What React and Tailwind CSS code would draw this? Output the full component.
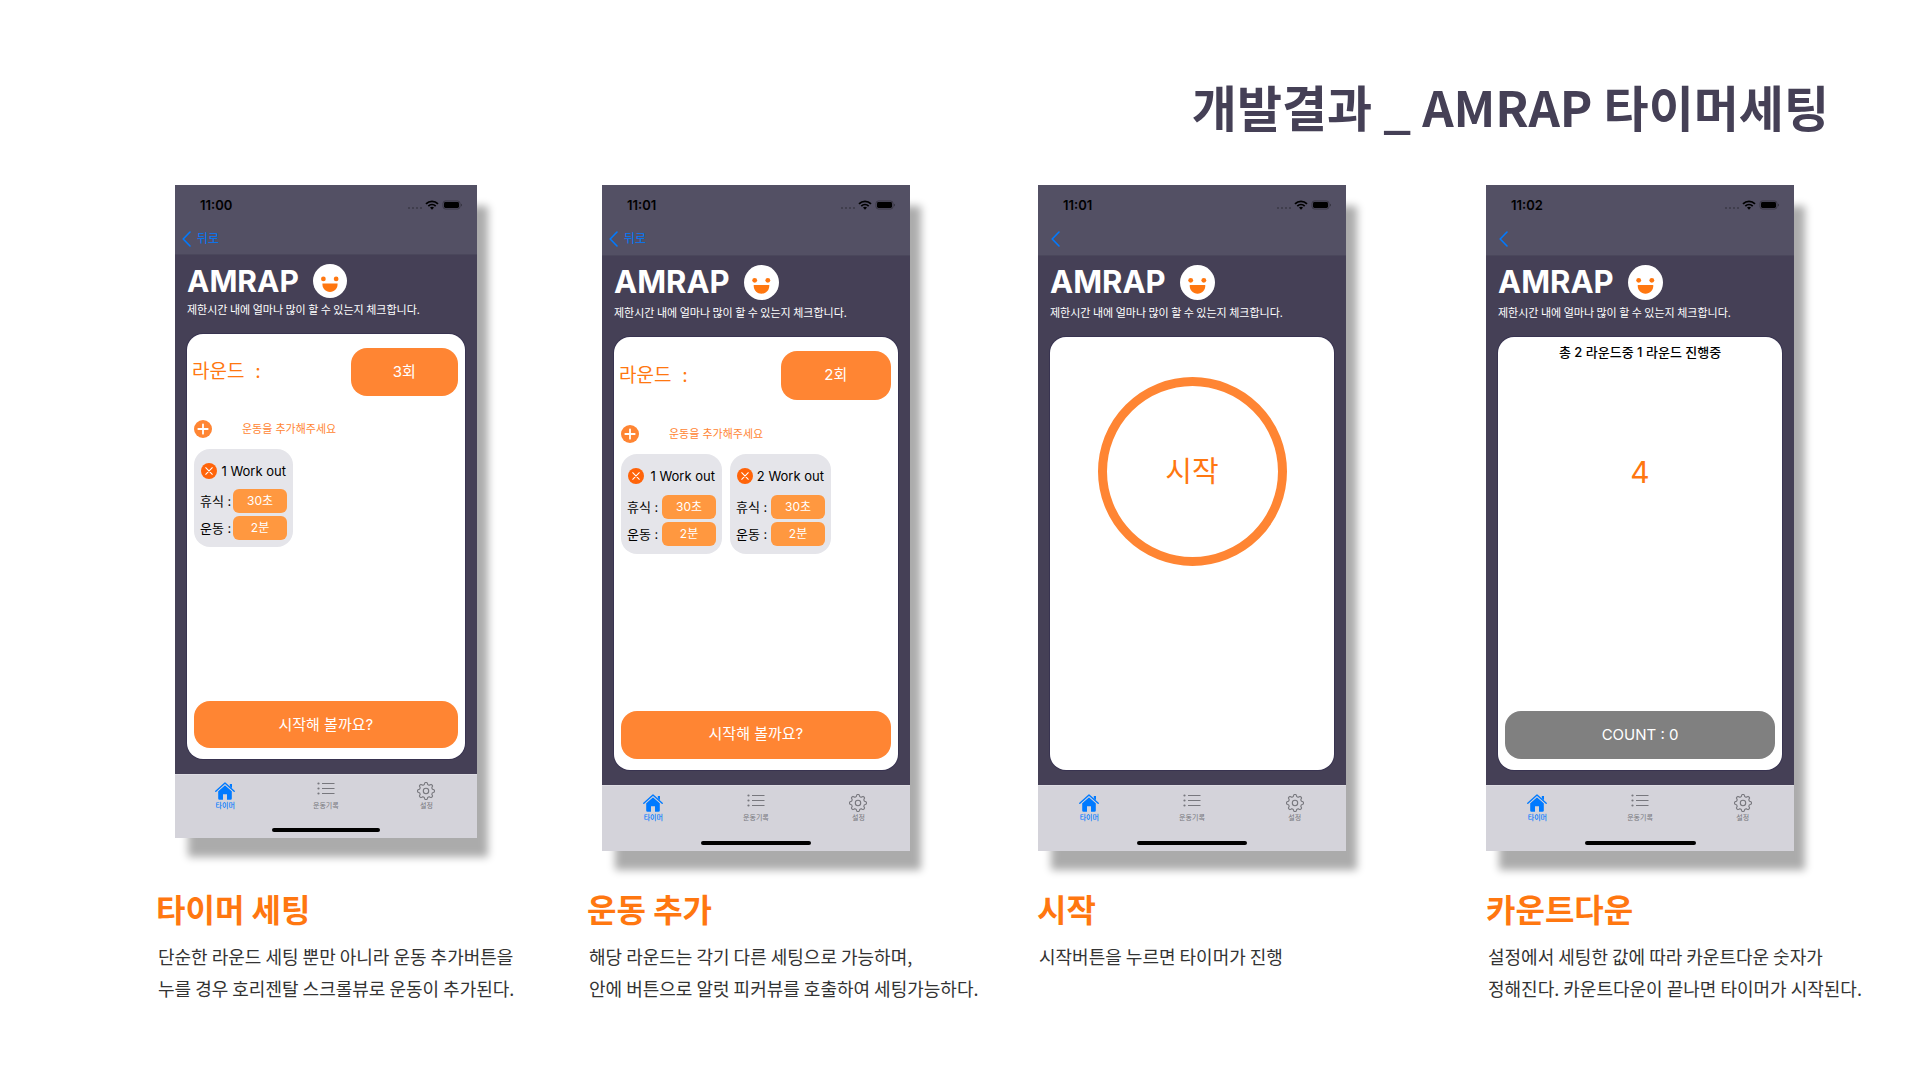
import React from "react";
import clsx from "clsx";

const UI_FONT = "font-['Inter','Noto_Sans_CJK_KR',sans-serif]";

function StatusIcons() {
  return (
    <svg width="56" height="12" viewBox="0 0 56 12" aria-hidden="true">
      <g fill="#3a3846">
        <circle cx="2" cy="9" r="1" />
        <circle cx="6" cy="9" r="1" />
        <circle cx="10" cy="9" r="1" />
        <circle cx="14" cy="9" r="1" />
      </g>
      <g fill="none" stroke="#000" strokeWidth="1.8">
        <path d="M19 4.8a8.6 8.6 0 0 1 12 0" />
        <path d="M21.3 7.1a5.4 5.4 0 0 1 7.4 0" />
      </g>
      <path d="M25 10.8l-2-2.2a2.9 2.9 0 0 1 4 0z" fill="#000" />
      <rect x="36" y="2" width="17" height="8" rx="2.4" fill="none" stroke="#33313d" strokeWidth="0.8" />
      <rect x="37" y="3" width="15" height="6" rx="1.4" fill="#000" />
      <path d="M54 4.8v2.6c.7-.2 1-.7 1-1.3s-.3-1.1-1-1.3z" fill="#33313d" />
    </svg>
  );
}

function Smiley({ compact }) {
  return (
    <svg className={compact ? "size-[34px]" : "size-[35px]"} viewBox="0 0 36 36" aria-hidden="true">
      <circle cx="18" cy="18" r="18" fill="#fff" />
      <circle cx="11" cy="15.8" r="2.5" fill="#ff7710" />
      <circle cx="24.5" cy="15.8" r="2.5" fill="#ff7710" />
      <path d="M10 20.6h16c.4 5.2-3.4 9-8 9s-8.400-3.800-8-9z" fill="#ff7710" />
    </svg>
  );
}

function HomeIcon() {
  return (
    <svg width="20" height="18" viewBox="0 0 20 18" aria-hidden="true">
      <path d="M10 3.300l6.800 6v7.200a1.300 1.300 0 0 1-1.300 1.300H12v-5.600H8v5.600H4.500a1.300 1.300 0 0 1-1.300-1.300V9.300z" fill="#007aff" />
      <path d="M.8 9.200L10 1l9.200 8.200" fill="none" stroke="#d4d3da" strokeWidth="3" />
      <path d="M.8 9.200L10 1l9.200 8.200" fill="none" stroke="#007aff" strokeWidth="1.400" strokeLinecap="round" strokeLinejoin="round" />
      <path d="M14.800 2h2.200v4.200l-2.200-2z" fill="#007aff" />
    </svg>
  );
}

function ListIcon() {
  return (
    <svg width="18" height="18" viewBox="0 0 18 18" aria-hidden="true">
      <g fill="#77777d">
        <circle cx="1.500" cy="1.500" r="1.100" />
        <circle cx="1.500" cy="6.500" r="1.100" />
        <circle cx="1.500" cy="11.500" r="1.100" />
      </g>
      <path d="M5 1.500h12.500M5 6.500h12.500M5 11.500h12.500" stroke="#77777d" strokeWidth="1" />
    </svg>
  );
}

function gearPath() {
  const points = [];
  for (let i = 0; i < 96; i++) {
    const a = (i / 96) * Math.PI * 2;
    const wave = Math.max(-1, Math.min(1, Math.cos(a * 8) * 1.7));
    const r = 7.5 + wave * 0.95;
    points.push((9 + r * Math.sin(a)).toFixed(2) + " " + (9 - r * Math.cos(a)).toFixed(2));
  }
  return "M" + points.join("L") + "Z";
}

function GearIcon() {
  return (
    <svg width="18" height="18" viewBox="0 0 18 18" fill="none" stroke="#77777d" strokeWidth="1.100" aria-hidden="true">
      <path d={gearPath()} strokeLinejoin="round" />
      <circle cx="9" cy="9" r="2.700" />
    </svg>
  );
}

function CircleGlyph({ size, color, cross }) {
  return (
    <svg width={size} height={size} viewBox="0 0 18 18" aria-hidden="true">
      <circle cx="9" cy="9" r="9" fill={color} />
      <path
        d={cross ? "M5.300 5.300l7.400 7.400M12.700 5.300l-7.400 7.400" : "M9 4.300v9.400M4.300 9h9.400"}
        stroke="#fff"
        strokeWidth={cross ? 1.2 : 1.8}
        strokeLinecap="round"
      />
    </svg>
  );
}

function Chip({ label, value }) {
  return (
    <div className="flex items-center justify-between">
      <span className="text-[13px] leading-6 text-black whitespace-nowrap">{label} :</span>
      <button type="button" aria-label={label + " " + value} className="h-6 w-[54px] rounded-md bg-[#ff9840] text-[12px] leading-6 text-white">
        {value}
      </button>
    </div>
  );
}

function WorkoutCard({ index, compact }) {
  return (
    <li className={clsx("rounded-[16px] bg-[#e5e5ea] px-1.5 pt-3", compact ? "h-[98px] w-[99px]" : "h-[100px] w-[101px]")}>
      <div className="flex items-center justify-between px-px">
        <button type="button" aria-label={"Remove workout " + index}>
          <CircleGlyph size={16} color="#ff640a" cross />
        </button>
        <span className="text-[13px] leading-5 text-black whitespace-nowrap">{index} Work out</span>
      </div>
      <div className={clsx("grid gap-[3px]", compact ? "mt-2" : "mt-[9px]")}>
        <Chip label="휴식" value="30초" />
        <Chip label="운동" value="2분" />
      </div>
    </li>
  );
}

function SettingScreen({ rounds, workouts, compact }) {
  return (
    <div className="flex grow flex-col px-[7px] pt-3.5 pb-[11px]">
      <div className="-ml-0.5 flex items-center justify-between">
        <span className="text-[19px] leading-6 text-[#ff7710] whitespace-pre">라운드  :</span>
        <button type="button" className={clsx("rounded-[16px] bg-[#ff8533] text-[15px] text-white", compact ? "h-12 w-[107px]" : "h-[49px] w-[110px]")}>
          {rounds}회
        </button>
      </div>
      <div className={clsx("flex items-center gap-[30px]", compact ? "mt-[23px]" : "mt-6")}>
        <button type="button" aria-label="운동 추가">
          <CircleGlyph size={18} color="#ff8533" />
        </button>
        <span className="text-[11px] leading-5 text-[#ff8533]">운동을 추가해주세요</span>
      </div>
      <ul className="mt-2.5 flex gap-2">
        {workouts.map((n) => (
          <WorkoutCard key={n} index={n} compact={compact} />
        ))}
      </ul>
      <button type="button" className={clsx("mt-auto rounded-[16px] bg-[#ff8533] text-[15px] text-white", compact ? "h-[47px]" : "h-12")}>
        시작해 볼까요?
      </button>
    </div>
  );
}

function StartScreen() {
  return (
    <div className="flex grow flex-col items-center pt-10">
      <button type="button" className="size-[189px] rounded-full border-[9px] border-[#ff8533] text-[29px] text-[#ff7710]">
        시작
      </button>
    </div>
  );
}

function CountdownScreen() {
  return (
    <div className="flex grow flex-col items-center px-[7px] pt-[5px] pb-[11px]">
      <p className="text-[13px] leading-5 font-medium text-black">총 2 라운드중 1 라운드 진행중</p>
      <p className="mt-[90px] text-[30px] leading-10 text-[#ff7710]">4</p>
      <button type="button" className="mt-auto h-12 w-full rounded-[16px] bg-[#808080] text-[15px] text-white">
        COUNT : 0
      </button>
    </div>
  );
}

function TabBar({ compact }) {
  const tabs = [
    { label: "타이머", icon: <HomeIcon />, active: true },
    { label: "운동기록", icon: <ListIcon /> },
    { label: "설정", icon: <GearIcon /> },
  ];
  return (
    <nav className={clsx("flex flex-col justify-between border-t border-[#dddce2] bg-[#d4d3da] pb-1.5", compact ? "h-16 pt-[7px]" : "h-[66px] pt-2")}>
      <div className="grid grid-cols-3">
        {tabs.map((t) => (
          <a key={t.label} href="#" className={clsx("flex flex-col items-center text-[7px]", t.active ? "font-medium text-[#007aff]" : "text-[#77777d]")}>
            {t.icon}
            <span className="mt-px leading-[10px]">{t.label}</span>
          </a>
        ))}
      </div>
      <div className="mx-auto h-1 w-[36%] rounded-full bg-black" />
    </nav>
  );
}

function Phone({ time, backLabel, compact, className, children }) {
  return (
    <div className={clsx(UI_FONT, "flex flex-col self-start bg-[#454056] shadow-[12px_20px_8px_-1px_rgba(0,0,0,0.33)]", className)}>
      <header className={clsx("border-b border-[#4a475b] bg-[#535064] pt-2.5", compact ? "h-[70px]" : "h-[71px]")}>
        <div className="flex items-center justify-between pl-[25px] pr-3.5">
          <span className="text-[13px] leading-5 font-semibold text-black">{time}</span>
          <StatusIcons />
        </div>
        <button type="button" aria-label={backLabel || "뒤로"} className={clsx("mt-3.5 flex items-center gap-1.5 text-[12px] leading-5 text-[#007aff]", backLabel ? "ml-[7px]" : "ml-[13px]")}>
          <svg width="9" height="20" viewBox="0 0 9 20" fill="none" stroke="#007aff" strokeWidth="1.600" strokeLinecap="round" strokeLinejoin="round" aria-hidden="true">
            <path d="M8 3L1.200 10L8 17" />
          </svg>
          {backLabel}
        </button>
      </header>
      <div className="flex grow flex-col px-3 pt-2 pb-[15px]">
        <div className="flex items-center gap-3.5">
          <h3 className={clsx("leading-9 font-bold text-white", compact ? "text-[30px]" : "text-[31px]")}>AMRAP</h3>
          <Smiley compact={compact} />
        </div>
        <p className={clsx("mb-[15px] font-['Noto_Sans_CJK_KR',sans-serif] text-[11px] leading-5 text-white whitespace-nowrap", !compact && "mt-0.5")}>제한시간 내에 얼마나 많이 할 수 있는지 체크합니다.</p>
        <div className="flex grow flex-col rounded-[16px] bg-white shadow-[0_0_0_1px_#383350]">{children}</div>
      </div>
      <TabBar compact={compact} />
    </div>
  );
}

function Feature({ title, lines, children }) {
  return (
    <article className="row-span-2 grid grid-rows-subgrid">
      {children}
      <div>
        <h2 className="text-[32px] leading-10 font-bold text-[#ff7710]">{title}</h2>
        <p className="mt-3 ml-0.5 text-[18px] leading-8 text-[#333333]">
          {lines.map((l) => (
            <span key={l} className="block whitespace-nowrap">{l}</span>
          ))}
        </p>
      </div>
    </article>
  );
}

export default function App() {
  return (
    <main className="min-h-screen bg-white pt-[74px] pb-16 font-['Noto_Sans_CJK_KR',sans-serif]">
      <h1 className="pr-[91px] text-right text-[49px] leading-[64px] font-bold text-[#454056]">개발결과 _ AMRAP 타이머세팅</h1>
      <section className="mt-[47px] ml-[156px] grid grid-cols-[431fr_450fr_449fr_434fr] grid-rows-[auto_auto] gap-y-[37px]">
        <Feature title="타이머 세팅" lines={["단순한 라운드 세팅 뿐만 아니라 운동 추가버튼을", "누를 경우 호리젠탈 스크롤뷰로 운동이 추가된다."]}>
          <Phone time="11:00" backLabel="뒤로" compact className="ml-[19px] aspect-[302/654] w-[70%]">
            <SettingScreen rounds={3} workouts={[1]} compact />
          </Phone>
        </Feature>
        <Feature title="운동 추가" lines={["해당 라운드는 각기 다른 세팅으로 가능하며,", "안에 버튼으로 알럿 피커뷰를 호출하여 세팅가능하다."]}>
          <Phone time="11:01" backLabel="뒤로" className="ml-[15px] aspect-[308/666] w-[68.4%]">
            <SettingScreen rounds={2} workouts={[1, 2]} />
          </Phone>
        </Feature>
        <Feature title="시작" lines={["시작버튼을 누르면 타이머가 진행"]}>
          <Phone time="11:01" className="ml-px aspect-[308/666] w-[68.6%]">
            <StartScreen />
          </Phone>
        </Feature>
        <Feature title="카운트다운" lines={["설정에서 세팅한 값에 따라 카운트다운 숫자가", "정해진다. 카운트다운이 끝나면 타이머가 시작된다."]}>
          <Phone time="11:02" className="aspect-[308/666] w-[71%]">
            <CountdownScreen />
          </Phone>
        </Feature>
      </section>
    </main>
  );
}
